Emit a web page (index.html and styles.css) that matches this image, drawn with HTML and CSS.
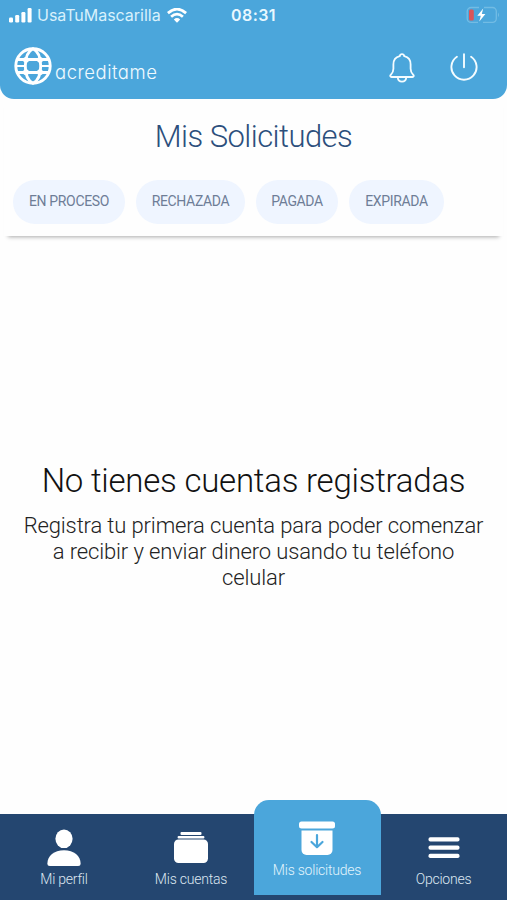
FILE: index.html
```html
<!DOCTYPE html>
<html lang="es">
<head>
<meta charset="utf-8">
<meta name="viewport" content="width=device-width, initial-scale=1">
<title>Mis Solicitudes</title>
<link rel="stylesheet" href="styles.css">
</head>
<body>
<div class="app">
  <header class="header">
    <div class="status">
      <div class="carrier">
        <svg class="signal" width="24" height="15" viewBox="0 0 24 15" fill="#fff"><rect x="0" y="9.5" width="4" height="5" rx="1.2"/><rect x="6.2" y="7" width="4" height="7.5" rx="1.2"/><rect x="12.4" y="4" width="4" height="10.5" rx="1.2"/><rect x="18.6" y="0" width="4" height="14.5" rx="1.2"/></svg>
        <span class="carrier-name">UsaTuMascarilla</span>
        <svg class="wifi" width="20" height="15" viewBox="0 0 20 15" fill="none" stroke="#fff" stroke-width="2.8"><path d="M.9 5.1Q10-2.8 19.1 5.1"/><path d="M4.1 8.7Q10 3.6 15.9 8.7"/><path d="M6.8 11.4Q10 8.8 13.2 11.4L10 14.8Z" fill="#fff" stroke="none"/></svg>
      </div>
      <span class="time">08:31</span>
      <svg class="battery" width="34" height="18" viewBox="0 0 34 18"><path d="M13 1.5H5a3.8 3.8 0 0 0-3.8 3.8v7.2A3.8 3.8 0 0 0 5 16.3h7M18 1.5h8.500a3.800 3.800 0 0 1 3.800 3.800v7.200a3.800 3.800 0 0 1-3.800 3.800H17" fill="none" stroke="#72bce4" stroke-width="1.300"/><path d="M32 6.500q2 2.400 0 4.800z" fill="#72bce4"/><rect x="3" y="3.500" width="4.800" height="11" rx="1.500" fill="#dc5558"/><path d="M17.200 2.500 11.300 9.800h3.500l-1.500 5.600 6.100-7.500h-3.600z" fill="#fff"/></svg>
    </div>
    <div class="topbar">
      <div class="brand">
        <svg width="38" height="38" viewBox="0 0 38 38" fill="none" stroke="#fff" stroke-width="2.900"><circle cx="19" cy="19" r="17.200"/><path d="M19 1.800C13.500 4.500 11.300 11 11.300 19s2.200 14.500 7.700 17.200C24.500 33.500 26.700 27 26.700 19S24.500 4.500 19 1.800z"/><path d="M4 12.500H34M4 25.500H34"/><path d="M2 19h8.400M27.600 19H36" stroke-width="2"/><g fill="#fff" stroke="none"><circle cx="12" cy="12.800" r="2.900"/><circle cx="26" cy="12.800" r="2.900"/><circle cx="12" cy="25.200" r="2.900"/><circle cx="26" cy="25.200" r="2.900"/></g></svg>
        <span class="brand-name">acreditame</span>
      </div>
      <div class="actions">
        <svg width="26" height="30" viewBox="0 0 26 30" fill="none" stroke="#f4fcff" stroke-width="1.800" stroke-linejoin="round" stroke-linecap="round"><path d="M10.700 3.200C11 1.700 12 1.100 13 1.100s2 .6 2.300 2.100c4.400 1 6.300 4.500 6.300 8.300v4.200c0 3.400 1 4.300 2.700 6.100.9 1 .4 2.200-.8 2.200h-21c-1.200 0-1.700-1.200-.8-2.200 1.700-1.800 2.700-2.700 2.700-6.100v-4.200c0-3.800 1.900-7.300 6.300-8.300z"/><path d="M8.700 24.300c.3 2.700 2 4.300 4.300 4.300s4-1.600 4.300-4.300"/></svg>
        <svg width="28" height="28" viewBox="0 0 28 28" fill="none" stroke="#f4fcff" stroke-width="1.900" stroke-linecap="round"><path d="M6.900 3.700A12.600 12.600 0 1 0 21.100 3.700M14 1.200v13"/></svg>
      </div>
    </div>
  </header>

  <section class="filters">
    <h1 class="title">Mis Solicitudes</h1>
    <div class="chips">
      <span class="chip chip-process">EN PROCESO</span>
      <span class="chip chip-rejected">RECHAZADA</span>
      <span class="chip chip-paid">PAGADA</span>
      <span class="chip chip-expired">EXPIRADA</span>
    </div>
  </section>

  <main class="empty">
    <h2 class="empty-title">No tienes cuentas registradas</h2>
    <p class="empty-text">Registra tu primera cuenta para poder comenzar<br>a recibir y enviar dinero usando tu teléfono<br>celular</p>
  </main>

  <nav class="tabs">
    <a class="tab">
      <svg width="34" height="38" viewBox="0 0 34 38" fill="#fff"><ellipse cx="17" cy="9.800" rx="8.600" ry="9.300"/><path d="M.4 34.500C.4 27 7 21.300 17 21.300S33.600 27 33.600 34.500c0 1.700-.8 2.500-2.500 2.500H2.900C1.200 37 .4 36.200.4 34.500z"/></svg>
      <span class="label label-profile">Mi perfil</span>
    </a>
    <a class="tab">
      <svg width="34" height="38" viewBox="0 0 34 38" fill="#fff"><rect x="6.500" y="3" width="21" height="2.900" rx="1"/><rect x="3.600" y="6.900" width="26.800" height="2.700" rx="1"/><rect x="0" y="10.500" width="34" height="23.500" rx="4.500"/></svg>
      <span class="label label-accounts">Mis cuentas</span>
    </a>
    <a class="tab tab-active">
      <svg width="36" height="38" viewBox="0 0 36 38"><rect x="0" y="1.500" width="36" height="7" rx="2.500" fill="#fff"/><path d="M2.500 10.500h31v19.500a5 5 0 0 1-5 5h-21a5 5 0 0 1-5-5z" fill="#fff"/><path d="M18 15v12.200M12.500 22l5.500 5.300 5.500-5.300" fill="none" stroke="#4ba6db" stroke-width="2.200" stroke-linecap="round" stroke-linejoin="round"/></svg>
      <span class="label label-requests">Mis solicitudes</span>
    </a>
    <a class="tab">
      <svg width="32" height="38" viewBox="0 0 32 38" fill="#fff"><rect x=".5" y="8.200" width="31" height="4.300" rx="1.800"/><rect x=".5" y="16.500" width="31" height="4.300" rx="1.800"/><rect x=".5" y="24.800" width="31" height="4.300" rx="1.800"/></svg>
      <span class="label label-options">Opciones</span>
    </a>
  </nav>
</div>
</body>
</html>
```
FILE: styles.css
```css
* { box-sizing: border-box; }
body {
  margin: 0;
  background: #fefefe;
  font-family: Roboto, "Liberation Sans", sans-serif;
  font-weight: 300;
}
h1, h2, p { margin: 0; font-weight: 300; }
svg { display: block; flex: none; }
.app { height: 900px; display: flex; flex-direction: column; overflow: hidden; }
.header {
  height: 99px;
  flex: none;
  background: #4ba6db;
  border-radius: 0 0 14px 14px;
  color: #fff;
}
.status {
  height: 30px;
  padding: 0 7px 0 9px;
  display: grid;
  grid-template-columns: 1fr auto 1fr;
  align-items: center;
}
.carrier { display: flex; align-items: center; }
.carrier-name {
  font: 400 16px/20px Inter, sans-serif;
  letter-spacing: -.02px;
  margin-left: 4px;
  width: 124px;
  color: #d8f1fc;
  white-space: nowrap;
}
.wifi { margin-left: 6px; }
.time { font: 600 16px/20px Inter, sans-serif; color: #e9f8ff; letter-spacing: .4px; margin-right: 2px; }
.battery { justify-self: end; }
.topbar {
  display: flex;
  justify-content: space-between;
  padding: 17px 29px 0 14px;
}
.brand { display: flex; gap: 3px; }
.brand-name {
  font: 300 18.5px/24px Inter, sans-serif;
  font-feature-settings: "cv11";
  letter-spacing: .5px;
  color: #f0faff;
  padding-top: 13px;
}
.actions { display: flex; gap: 35px; padding-top: 6px; }
.filters {
  height: 137px;
  flex: none;
  margin: 0 4px;
  padding: 20px 9px 0;
  box-shadow: 0 5px 4px -4px #aaa;
}
.title {
  font-size: 31px;
  letter-spacing: -.55px;
  line-height: 36px;
  text-align: center;
  color: #2c4f7c;
  white-space: nowrap;
}
.chips { display: flex; gap: 11px; margin-top: 25px; }
.chip {
  height: 44px;
  border-radius: 22px;
  background: #eff5ff;
  color: #6e7d97;
  font-size: 14px;
  letter-spacing: -.35px;
  font-weight: 400;
  line-height: 43px;
  text-align: center;
  white-space: nowrap;
}
.chip-process { width: 112px; }
.chip-rejected { width: 109px; }
.chip-paid { width: 82px; }
.chip-expired { width: 95px; }
.empty { flex: 1; padding-top: 225px; text-align: center; white-space: nowrap; }
.empty-title { font-size: 33px; letter-spacing: -.23px; line-height: 40px; color: #111; }
.empty-text { margin-top: 12px; font-size: 22px; letter-spacing: -.13px; line-height: 26px; color: #222; }
.tabs {
  height: 86px;
  flex: none;
  background: #244670;
  display: grid;
  grid-template-columns: repeat(4, 127px);
  align-items: start;
}
.tab {
  padding-top: 15px;
  height: 86px;
  display: flex;
  flex-direction: column;
  align-items: center;
  padding-left: 1px;
}
.tab-active {
  height: 95px;
  margin-top: -14px;
  padding: 20px 1px 0 0;
  background: #4ba6db;
  border-radius: 15px 15px 0 0;
}
.tab:last-child { padding: 15px 2px 0 0; }
.label {
  margin-top: 4px;
  font-size: 14px;
  letter-spacing: -.22px;
  line-height: 17px;
  color: #dde6f1;
  white-space: nowrap;
}
.label-requests { margin-top: 4px; color: #e2f4fc; }
```
